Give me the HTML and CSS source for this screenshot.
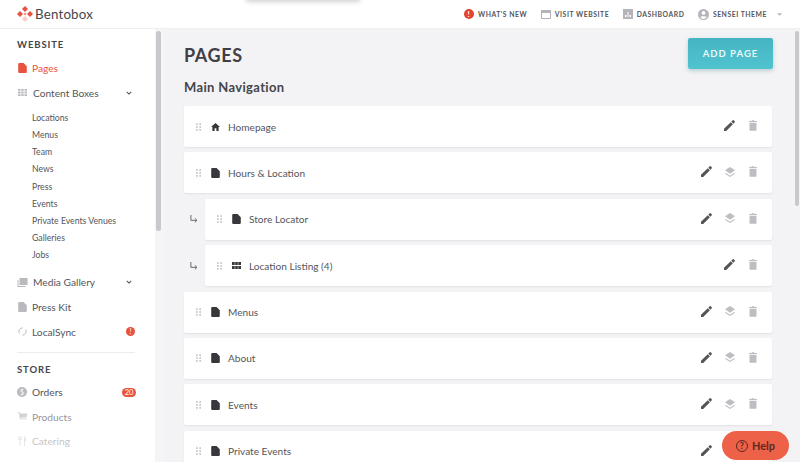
FILE: index.html
```html
<!DOCTYPE html>
<html lang="en">
<head>
<meta charset="utf-8">
<title>Bentobox Pages</title>
<link rel="stylesheet" href="styles.css">
</head>
<body>
<svg class="defs" width="0" height="0" aria-hidden="true">
  <symbol id="i-page" viewBox="0 0 12 14"><path d="M1.500 0H7.500L12 4.500V12.500A1.500 1.500 0 0 1 10.500 14H1.500A1.500 1.500 0 0 1 0 12.500V1.500A1.500 1.500 0 0 1 1.500 0Z"/></symbol>
  <symbol id="i-grip" viewBox="0 0 6 9"><g><rect x="0" y="0" width="2" height="2"/><rect x="4" y="0" width="2" height="2"/><rect x="0" y="3.500" width="2" height="2"/><rect x="4" y="3.500" width="2" height="2"/><rect x="0" y="7" width="2" height="2"/><rect x="4" y="7" width="2" height="2"/></g></symbol>
  <symbol id="i-pen" viewBox="0 0 12 12"><path d="M0 12V9.600L7.400 2.400L9.700 4.600L2.400 12ZM8 1.800L9.200 .5A1.200 1.200 0 0 1 10.900 .5L11.500 1.100A1.200 1.200 0 0 1 11.500 2.800L10.300 4Z"/></symbol>
  <symbol id="i-layers" viewBox="0 0 12 12"><path d="M6 0L12 4L6 8L0 4Z"/><path d="M1 7.200L6 10.500L11 7.200L12 8L6 12L0 8Z"/></symbol>
  <symbol id="i-trash" viewBox="0 0 9 12"><path d="M0 1H2.800L3.200 0H5.800L6.200 1H9V2.200H0ZM.6 3H8.400V11A1 1 0 0 1 7.400 12H1.600A1 1 0 0 1 .6 11Z"/></symbol>
  <symbol id="i-chev" viewBox="0 0 8 5"><path d="M1 1L4 4L7 1" fill="none" stroke="currentColor" stroke-width="1.400"/></symbol>
  <symbol id="i-sub" viewBox="0 0 9 9"><path d="M1 0V6H7.500M5.500 3.800L7.800 6L5.500 8.200" fill="none" stroke="currentColor" stroke-width="1.100"/></symbol>
</svg>

<header class="topbar">
  <div class="brand">
    <svg class="logo" viewBox="0 0 16 16" width="16" height="16"><path fill="#e8523f" d="M8 0L11 3L8 6L5 3Z"/><path fill="#e8523f" d="M3 5L6 8L3 11L0 8Z"/><path fill="#e8523f" d="M13 5L16 8L13 11L10 8Z"/><path fill="#f8cfc6" d="M8 10L11 13L8 16L5 13Z"/><path fill="#ee8473" d="M8 6.500L9.500 8L8 9.500L6.500 8Z"/></svg>
    <span class="brand-name">Bentobox</span>
  </div>
  <nav class="topnav">
    <a class="topnav-item"><span class="alert-dot">!</span>WHAT'S NEW</a>
    <a class="topnav-item"><svg class="top-icon" viewBox="0 0 10 9" width="10" height="9"><path d="M0 0H10V9H0ZM1 3V8H9V3Z" fill-rule="evenodd"/></svg>VISIT WEBSITE</a>
    <a class="topnav-item"><svg class="top-icon" viewBox="0 0 10 10" width="10" height="10"><path d="M0 0H10V10H0ZM2 6V8H3.500V6ZM4.500 3V8H5.500V3ZM6.500 6V8H8V6Z" fill-rule="evenodd"/></svg>DASHBOARD</a>
    <a class="topnav-item"><svg class="top-icon" viewBox="0 0 11 11" width="11" height="11"><path d="M5.500 0A5.500 5.500 0 1 0 5.500 11A5.500 5.500 0 1 0 5.500 0ZM5.500 2A1.900 1.900 0 1 1 5.500 5.800A1.900 1.900 0 1 1 5.500 2ZM2.300 8.300C3 7 8 7 8.700 8.300A4 4 0 0 1 2.300 8.300Z" fill-rule="evenodd"/></svg>SENSEI THEME<svg class="top-caret" viewBox="0 0 6 3" width="5" height="3"><path d="M0 0H6L3 3Z"/></svg></a>
  </nav>
</header>
<div class="ghost-shadow"></div>

<div class="body-wrap">
  <aside class="sidebar">
    <div class="side-scroll">
      <h2 class="side-title">WEBSITE</h2>
      <a class="side-item active"><svg class="side-icon red" width="8" height="10"><use href="#i-page"/></svg><span class="label">Pages</span></a>
      <a class="side-item group"><svg class="side-icon" viewBox="0 0 9 7" width="9" height="7"><path d="M0 0H2.500V1.800H0ZM3.200 0H5.700V1.800H3.200ZM6.500 0H9V1.800H6.500ZM0 2.600H2.500V4.400H0ZM3.200 2.600H5.700V4.400H3.200ZM6.500 2.600H9V4.400H6.500ZM0 5.200H2.500V7H0ZM3.200 5.200H5.700V7H3.200ZM6.500 5.200H9V7H6.500Z"/></svg><span class="label wide">Content Boxes</span><svg class="chev" width="6" height="4"><use href="#i-chev"/></svg></a>
      <ul class="side-sub">
        <li>Locations</li><li>Menus</li><li>Team</li><li>News</li><li>Press</li><li>Events</li><li>Private Events Venues</li><li>Galleries</li><li>Jobs</li>
      </ul>
      <a class="side-item group"><svg class="side-icon" viewBox="0 0 10 9" width="10" height="9"><path d="M2 0H10V7H2ZM0 2H1V8H8V9H0Z"/></svg><span class="label wide">Media Gallery</span><svg class="chev" width="6" height="4"><use href="#i-chev"/></svg></a>
      <a class="side-item"><svg class="side-icon" width="8" height="10"><use href="#i-page"/></svg><span class="label">Press Kit</span></a>
      <a class="side-item"><svg class="side-icon" viewBox="0 0 10 10" width="9" height="9"><path d="M5 1A4 4 0 0 0 1.500 7M5 9A4 4 0 0 0 8.500 3" fill="none" stroke="#b5b5ba" stroke-width="1.100"/></svg><span class="label grow">LocalSync</span><span class="badge round">!</span></a>
      <hr class="side-rule">
      <h2 class="side-title store">STORE</h2>
      <a class="side-item"><span class="coin">$</span><span class="label grow">Orders</span><span class="badge pill">20</span></a>
      <a class="side-item faded"><svg class="side-icon" viewBox="0 0 10 9" width="10" height="9"><path d="M0 0H2L2.500 1.500H10L8.800 5.500H3.200L3.500 6.500H9V7.200H2.500L1.300 .8H0Z"/></svg><span class="label">Products</span></a>
      <a class="side-item fainter"><svg class="side-icon" viewBox="0 0 10 10" width="10" height="10"><path d="M1 0V4H2V10H3V4H4V0H3.400V2.500H2.900V0H2.100V2.500H1.600V0ZM6 0C8 0 8.500 2 8.500 5H7.500V10H6.500V0Z"/></svg><span class="label">Catering</span></a>
    </div>
    <div class="side-track"><div class="side-thumb"></div></div>
  </aside>

  <main class="main">
    <div class="main-inner">
      <div class="page-head">
        <h1 class="page-title">PAGES</h1>
        <button class="add-btn">ADD PAGE</button>
      </div>
      <h2 class="nav-title">Main Navigation</h2>
      <ul class="page-list">
        <li class="row">
          <div class="card">
            <svg class="grip" width="5" height="8"><use href="#i-grip"/></svg>
            <svg class="type-icon" viewBox="0 0 10 9" width="9" height="8"><path d="M5 0L10 4.500H8.500V9H6V6H4V9H1.500V4.500H0Z"/></svg>
            <span class="card-name">Homepage</span>
            <span class="actions"><svg class="a-pen" width="11" height="11"><use href="#i-pen"/></svg><svg class="a-trash" width="8" height="11"><use href="#i-trash"/></svg></span>
          </div>
        </li>
        <li class="row">
          <div class="card">
            <svg class="grip" width="5" height="8"><use href="#i-grip"/></svg>
            <svg class="type-icon" width="8" height="10"><use href="#i-page"/></svg>
            <span class="card-name">Hours &amp; Location</span>
            <span class="actions"><svg class="a-pen" width="11" height="11"><use href="#i-pen"/></svg><svg class="a-layers" width="10" height="10"><use href="#i-layers"/></svg><svg class="a-trash" width="8" height="11"><use href="#i-trash"/></svg></span>
          </div>
        </li>
        <li class="row child">
          <svg class="sub-arrow" width="8" height="8"><use href="#i-sub"/></svg>
          <div class="card">
            <svg class="grip" width="5" height="8"><use href="#i-grip"/></svg>
            <svg class="type-icon" width="8" height="10"><use href="#i-page"/></svg>
            <span class="card-name">Store Locator</span>
            <span class="actions"><svg class="a-pen" width="11" height="11"><use href="#i-pen"/></svg><svg class="a-layers" width="10" height="10"><use href="#i-layers"/></svg><svg class="a-trash" width="8" height="11"><use href="#i-trash"/></svg></span>
          </div>
        </li>
        <li class="row child">
          <svg class="sub-arrow" width="8" height="8"><use href="#i-sub"/></svg>
          <div class="card">
            <svg class="grip" width="5" height="8"><use href="#i-grip"/></svg>
            <svg class="type-icon" viewBox="0 0 9 7" width="9" height="7"><path d="M0 0H2.700V3H0ZM3.200 0H5.800V3H3.200ZM6.300 0H9V3H6.300ZM0 4H2.700V7H0ZM3.200 4H5.800V7H3.200ZM6.300 4H9V7H6.300Z"/></svg>
            <span class="card-name">Location Listing (4)</span>
            <span class="actions"><svg class="a-pen" width="11" height="11"><use href="#i-pen"/></svg><svg class="a-trash" width="8" height="11"><use href="#i-trash"/></svg></span>
          </div>
        </li>
        <li class="row">
          <div class="card">
            <svg class="grip" width="5" height="8"><use href="#i-grip"/></svg>
            <svg class="type-icon" width="8" height="10"><use href="#i-page"/></svg>
            <span class="card-name">Menus</span>
            <span class="actions"><svg class="a-pen" width="11" height="11"><use href="#i-pen"/></svg><svg class="a-layers" width="10" height="10"><use href="#i-layers"/></svg><svg class="a-trash" width="8" height="11"><use href="#i-trash"/></svg></span>
          </div>
        </li>
        <li class="row">
          <div class="card">
            <svg class="grip" width="5" height="8"><use href="#i-grip"/></svg>
            <svg class="type-icon" width="8" height="10"><use href="#i-page"/></svg>
            <span class="card-name">About</span>
            <span class="actions"><svg class="a-pen" width="11" height="11"><use href="#i-pen"/></svg><svg class="a-layers" width="10" height="10"><use href="#i-layers"/></svg><svg class="a-trash" width="8" height="11"><use href="#i-trash"/></svg></span>
          </div>
        </li>
        <li class="row">
          <div class="card">
            <svg class="grip" width="5" height="8"><use href="#i-grip"/></svg>
            <svg class="type-icon" width="8" height="10"><use href="#i-page"/></svg>
            <span class="card-name">Events</span>
            <span class="actions"><svg class="a-pen" width="11" height="11"><use href="#i-pen"/></svg><svg class="a-layers" width="10" height="10"><use href="#i-layers"/></svg><svg class="a-trash" width="8" height="11"><use href="#i-trash"/></svg></span>
          </div>
        </li>
        <li class="row">
          <div class="card">
            <svg class="grip" width="5" height="8"><use href="#i-grip"/></svg>
            <svg class="type-icon" width="8" height="10"><use href="#i-page"/></svg>
            <span class="card-name">Private Events</span>
            <span class="actions"><svg class="a-pen" width="11" height="11"><use href="#i-pen"/></svg><svg class="a-layers" width="10" height="10"><use href="#i-layers"/></svg><svg class="a-trash" width="8" height="11"><use href="#i-trash"/></svg></span>
          </div>
        </li>
      </ul>
    </div>
    <div class="main-track"><div class="main-thumb"></div></div>
  </main>
</div>

<button class="help"><span class="help-q">?</span>Help</button>
</body>
</html>
```

FILE: styles.css
```css
* { box-sizing: border-box; }
html, body { margin: 0; height: 100%; overflow: hidden; }
body { font-family: "Lato", "Liberation Sans", sans-serif; color: #4a4a50; background: #f3f3f5; display: flex; flex-direction: column; height: 462px; }
.defs { position: absolute; }
ul { list-style: none; margin: 0; padding: 0; }
h1, h2 { margin: 0; }

.topbar { height: 29px; flex: none; display: flex; align-items: center; justify-content: space-between; background: #fff; padding: 0 18px 0 17px; border-bottom: 1px solid #efeff1; }
.brand { display: flex; align-items: center; gap: 2px; }
.brand-name { font-size: 13.300px; color: #46464b; letter-spacing: .2px; }
.topnav { display: flex; align-items: center; gap: 13.500px; }
.topnav-item { display: flex; align-items: center; gap: 4px; font-size: 6.800px; font-weight: 700; letter-spacing: .55px; color: #55555a; white-space: nowrap; }
.top-icon { fill: #b4b4ba; }
.top-caret { fill: #b5b5ba; margin-left: 6px; }
.alert-dot { width: 10px; height: 10px; border-radius: 50%; background: #e5432f; color: #fff; font-size: 8px; line-height: 10px; text-align: center; }
.ghost-shadow { position: absolute; left: 246px; top: -8px; width: 114px; height: 8px; box-shadow: 0 2px 5px rgba(0,0,0,.18); }

.body-wrap { flex: 1; display: flex; min-height: 0; }
.sidebar { width: 164px; flex: none; background: #fff; display: flex; }
.side-scroll { width: 155px; padding: 10px 20px 0 17px; flex: none; }
.side-track { width: 9px; padding: 2px 3px 0 1px; background: #f5f5f7; }
.side-thumb { width: 5px; height: 200px; background: #c9c9cd; border-radius: 3px; }
.side-title { font-size: 9.500px; font-weight: 700; letter-spacing: .9px; color: #45454a; line-height: 12px; }
.side-item { display: flex; align-items: center; height: 24.600px; font-size: 10.200px; color: #55555a; }
.side-title + .side-item { margin-top: 5px; }
.store + .side-item { margin-top: 4px; }
.side-icon { fill: #b9b9be; width: 11px; margin-right: 4px; flex: none; }
.side-icon.red { fill: #e8523f; }
.active .label { color: #e8523f; }
.group .side-icon { margin-right: 5px; }
.label.wide, .label.grow { flex: 1; }
.chev { color: #55555a; margin-right: 3px; }
.side-sub { padding: 4px 0 7px 15px; font-size: 8.700px; color: #55555a; }
.side-sub li { height: 17.100px; line-height: 17px; white-space: nowrap; }
.badge { background: #e8523f; color: #fff; font-size: 7.500px; text-align: center; flex: none; }
.badge.round { width: 9px; height: 9px; line-height: 9px; border-radius: 50%; }
.badge.pill { width: 14px; height: 9px; line-height: 9px; border-radius: 5px; margin-right: -1px; }
.coin { width: 10px; height: 10px; margin-right: 5px; border-radius: 50%; background: #b9b9be; color: #fff; font-size: 7px; line-height: 10px; text-align: center; flex: none; }
.side-rule { border: 0; border-top: 1px solid #ececee; margin: 8px 0 11px; }
.faded { opacity: .62; }
.fainter { opacity: .35; }

.main { flex: 1; display: flex; min-width: 0; }
.main-inner { flex: 1; padding: 9px 21px 0 20px; min-width: 0; }
.page-head { display: flex; align-items: flex-start; justify-content: space-between; height: 40px; }
.page-title { font-size: 18px; font-weight: 700; letter-spacing: .6px; color: #3f3f44; padding-top: 6px; line-height: 22px; }
.add-btn { width: 85px; height: 31px; margin: 0 -1px 0 0; border: 0; border-radius: 2px; background: linear-gradient(#46b4c2, #50c4d0); color: #e9f7f9; font: 700 9.500px "Lato", sans-serif; letter-spacing: 1px; box-shadow: 0 2px 4px rgba(60,120,130,.3); }
.nav-title { font-size: 13px; font-weight: 700; letter-spacing: .35px; color: #45454a; line-height: 18px; margin-bottom: 10px; }
.page-list { display: flex; flex-direction: column; gap: 5.400px; }
.row { display: flex; align-items: center; }
.row.child { padding-left: 6px; }
.sub-arrow { color: #66666b; margin-right: 7px; flex: none; }
.card { flex: 1; height: 41px; display: flex; align-items: center; background: #fff; border-radius: 2px; box-shadow: 0 1px 2px rgba(0,0,0,.07); padding: 0 15px 0 12px; }
.grip { fill: #c3c3c8; margin-right: 10px; flex: none; }
.type-icon { fill: #38383c; width: 9px; margin-right: 8px; flex: none; }
.card-name { flex: 1; color: #55555a; font-size: 10.100px; }
.actions { display: flex; align-items: center; gap: 14px; margin-top: -2px; }
.a-pen { fill: #545458; }
.a-layers { fill: #bdbdc2; margin-left: -1px; }
.a-trash { fill: #bdbdc2; }

.main-track { width: 7px; padding: 2px 0 0 2px; flex: none; }
.main-thumb { width: 4px; height: 175px; background: #c9c9cd; border-radius: 2px; }

.help { position: absolute; left: 722px; top: 431px; width: 67px; height: 29px; border: 0; border-radius: 15px; background: #ed6148; color: #5c2a22; font: 700 11px "Lato", sans-serif; display: flex; align-items: center; justify-content: center; gap: 4px; padding: 0; }
.help-q { width: 12px; height: 12px; border: 1.200px solid #5c2a22; border-radius: 50%; font-size: 9px; line-height: 10px; text-align: center; }
```
